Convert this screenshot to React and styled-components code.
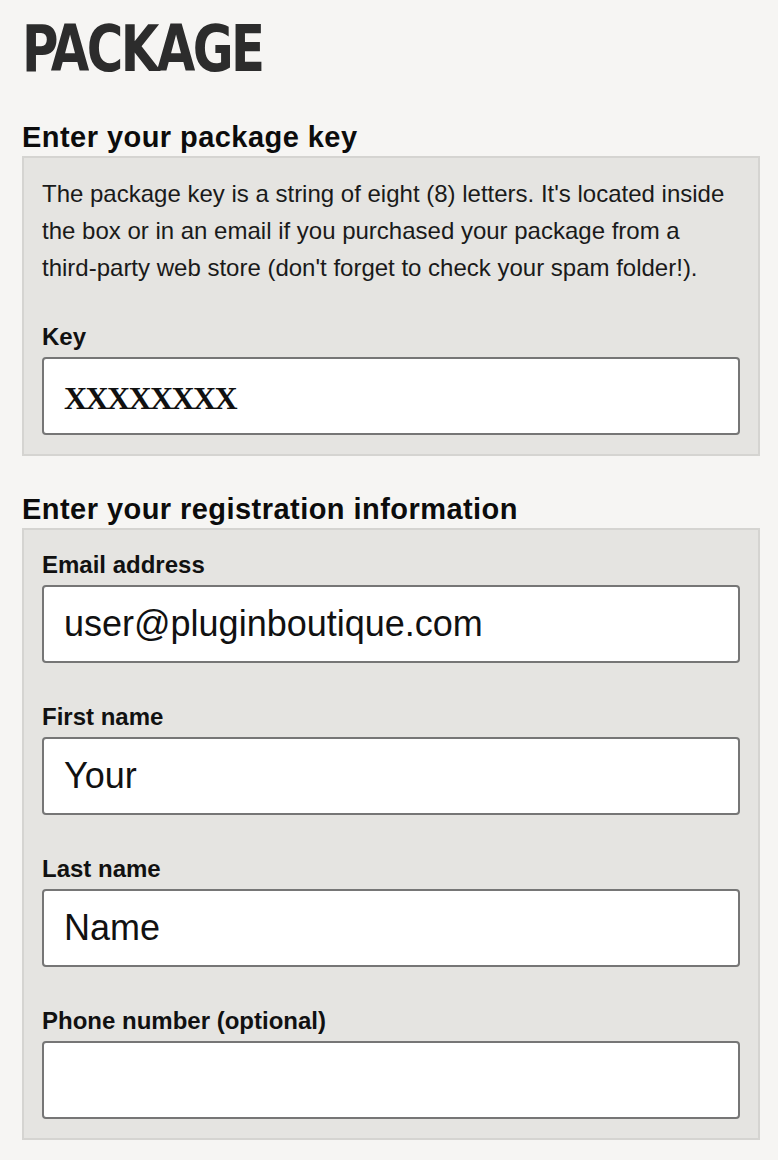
import styled, { createGlobalStyle } from "styled-components";

const GlobalStyle = createGlobalStyle`
  html, body {
    margin: 0;
    padding: 0;
    background: #f6f5f3;
  }
  body {
    font-family: "Liberation Sans", Arial, sans-serif;
    color: #111;
  }
`;

const Page = styled.div`
  padding: 17px 18px 20px 22px;
`;

const Title = styled.h1`
  margin: 0 0 38px;
  font-family: "DejaVu Sans Condensed", "Liberation Sans Narrow", "Liberation Sans", sans-serif;
  font-stretch: condensed;
  font-weight: 700;
  font-size: 64px;
  line-height: 64px;
  letter-spacing: -3px;
  color: #2c2c2c;

  span {
    display: inline-block;
    transform: scaleX(0.865);
    transform-origin: left center;
  }
`;

const Section = styled.section`
  & + & {
    margin-top: 35px;
  }
`;

const Heading = styled.h2`
  margin: 0 0 1px;
  font-size: 29px;
  line-height: 36px;
  letter-spacing: 0.45px;
  font-weight: 700;
  color: #0c0c0c;
`;

const Panel = styled.div`
  background: #e5e4e1;
  border: 2px solid #d5d4d1;
  padding: 17px 18px 19px;
`;

const Intro = styled.p`
  margin: 0 0 33px;
  font-size: 24px;
  line-height: 37px;
  color: #1a1a1a;
`;

const Field = styled.div`
  & + & {
    margin-top: 36px;
  }
`;

const Label = styled.label`
  display: block;
  margin-bottom: 2px;
  font-size: 24px;
  line-height: 36px;
  font-weight: 700;
  color: #111;
`;

const Input = styled.input`
  display: block;
  box-sizing: border-box;
  width: 100%;
  height: 78px;
  margin: 0;
  padding: ${(p) => (p.$serif ? "5px 20px 0" : "0 20px")};
  background: #fff;
  border: 2px solid #767676;
  border-radius: 4px;
  font-family: ${(p) =>
    p.$serif
      ? `"Liberation Serif", "Times New Roman", serif`
      : `"Liberation Sans", Arial, sans-serif`};
  font-weight: ${(p) => (p.$serif ? 700 : 400)};
  font-size: ${(p) => (p.$serif ? "32px" : "36px")};
  letter-spacing: ${(p) => (p.$serif ? "-1.6px" : "normal")};
  color: #111;
  outline: none;
`;

const fields = [
  { id: "email", label: "Email address", value: "user@pluginboutique.com" },
  { id: "first", label: "First name", value: "Your" },
  { id: "last", label: "Last name", value: "Name" },
  { id: "phone", label: "Phone number (optional)", value: "" },
];

export default function App() {
  return (
    <>
      <GlobalStyle />
      <Page>
        <Title>
          <span>PACKAGE</span>
        </Title>

        <Section>
          <Heading>Enter your package key</Heading>
          <Panel>
            <Intro>
              The package key is a string of eight (8) letters. It's located
              inside the box or in an email if you purchased your package from
              a third-party web store (don't forget to check your spam folder!).
            </Intro>
            <Field>
              <Label htmlFor="key">Key</Label>
              <Input id="key" $serif defaultValue="XXXXXXXX" />
            </Field>
          </Panel>
        </Section>

        <Section>
          <Heading>Enter your registration information</Heading>
          <Panel>
            {fields.map((f) => (
              <Field key={f.id}>
                <Label htmlFor={f.id}>{f.label}</Label>
                <Input id={f.id} defaultValue={f.value} />
              </Field>
            ))}
          </Panel>
        </Section>
      </Page>
    </>
  );
}
